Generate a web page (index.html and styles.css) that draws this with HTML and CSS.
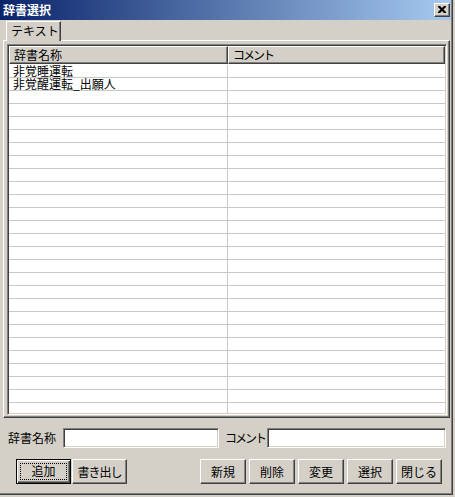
FILE: index.html
```html
<!DOCTYPE html>
<html lang="ja">
<head>
    <meta charset="UTF-8">
    <title>辞書選択</title>
    <link rel="stylesheet" href="styles.css">
</head>
<body>
    <div class="window">
        <div class="titlebar">
            <span class="title">辞書選択</span>
            <span class="close-btn">
                <svg width="8" height="7" viewBox="0 0 8 7">
                    <path d="M0 0h2l2 2 2-2h2v1l-2.5 2.5 2.5 2.5v1h-2l-2-2-2 2h-2v-1l2.5-2.5-2.5-2.5z" fill="#000"/>
                </svg>
            </span>
        </div>
        <div class="content">
            <div class="tabs">
                <div class="tab">テキスト</div>
            </div>
            <div class="panel">
                <div class="list">
                    <div class="list-header">
                        <div class="head-cell col-name">辞書名称</div>
                        <div class="head-cell col-comment narrow">コメント</div>
                    </div>
                    <div class="list-body">
                        <div class="row"><div class="cell col-name">非覚睡運転</div><div class="cell col-comment"></div></div>
                        <div class="row"><div class="cell col-name">非覚醒運転_出願人</div><div class="cell col-comment"></div></div>
                        <div class="row"><div class="cell col-name"></div><div class="cell col-comment"></div></div>
                        <div class="row"><div class="cell col-name"></div><div class="cell col-comment"></div></div>
                        <div class="row"><div class="cell col-name"></div><div class="cell col-comment"></div></div>
                        <div class="row"><div class="cell col-name"></div><div class="cell col-comment"></div></div>
                        <div class="row"><div class="cell col-name"></div><div class="cell col-comment"></div></div>
                        <div class="row"><div class="cell col-name"></div><div class="cell col-comment"></div></div>
                        <div class="row"><div class="cell col-name"></div><div class="cell col-comment"></div></div>
                        <div class="row"><div class="cell col-name"></div><div class="cell col-comment"></div></div>
                        <div class="row"><div class="cell col-name"></div><div class="cell col-comment"></div></div>
                        <div class="row"><div class="cell col-name"></div><div class="cell col-comment"></div></div>
                        <div class="row"><div class="cell col-name"></div><div class="cell col-comment"></div></div>
                        <div class="row"><div class="cell col-name"></div><div class="cell col-comment"></div></div>
                        <div class="row"><div class="cell col-name"></div><div class="cell col-comment"></div></div>
                        <div class="row"><div class="cell col-name"></div><div class="cell col-comment"></div></div>
                        <div class="row"><div class="cell col-name"></div><div class="cell col-comment"></div></div>
                        <div class="row"><div class="cell col-name"></div><div class="cell col-comment"></div></div>
                        <div class="row"><div class="cell col-name"></div><div class="cell col-comment"></div></div>
                        <div class="row"><div class="cell col-name"></div><div class="cell col-comment"></div></div>
                        <div class="row"><div class="cell col-name"></div><div class="cell col-comment"></div></div>
                        <div class="row"><div class="cell col-name"></div><div class="cell col-comment"></div></div>
                        <div class="row"><div class="cell col-name"></div><div class="cell col-comment"></div></div>
                        <div class="row"><div class="cell col-name"></div><div class="cell col-comment"></div></div>
                        <div class="row"><div class="cell col-name"></div><div class="cell col-comment"></div></div>
                        <div class="row"><div class="cell col-name"></div><div class="cell col-comment"></div></div>
                        <div class="row"><div class="cell col-name"></div><div class="cell col-comment"></div></div>
                        <div class="row"><div class="cell col-name"></div><div class="cell col-comment"></div></div>
                    </div>
                </div>
            </div>
            <div class="form-row">
                <label class="field-label label-name">辞書名称</label>
                <input type="text" class="field input-name">
                <label class="field-label label-comment narrow">コメント</label>
                <input type="text" class="field input-comment">
            </div>
            <div class="button-row">
                <div class="button-group left">
                    <button class="btn btn-default"><span class="focus">追加</span></button>
                    <button class="btn btn-wide">書き出し</button>
                </div>
                <div class="button-group right">
                    <button class="btn">新規</button>
                    <button class="btn">削除</button>
                    <button class="btn">変更</button>
                    <button class="btn">選択</button>
                    <button class="btn">閉じる</button>
                </div>
            </div>
        </div>
    </div>
</body>
</html>
```

FILE: styles.css
```css
body {
    margin: 0;
    padding: 0;
    background-color: #d4d0c8; /* classic dialog grey */
    font-family: "Noto Sans CJK JP", "DejaVu Sans", sans-serif;
    font-size: 12px;
    color: #000;
}

.window {
    width: 453px;
    height: 495px;
    box-sizing: border-box;
    border-right: 1px solid #404040;
    border-bottom: 1px solid #404040;
    box-shadow: inset -1px -1px #808080;
    background-color: #d4d0c8;
    overflow: hidden;
}

/* Title bar */
.titlebar {
    height: 20px;
    width: 451px;
    display: flex;
    align-items: center;
    justify-content: space-between;
    background: linear-gradient(to right, #0a246a, #a6caf0);
}

.title {
    color: #fff;
    font-weight: bold;
    font-size: 12px;
    line-height: 14px;
    padding-left: 3px;
}

.close-btn {
    width: 16px;
    height: 14px;
    box-sizing: border-box;
    margin-right: 1px;
    display: flex;
    align-items: center;
    justify-content: center;
    background-color: #d4d0c8;
    border: 1px solid;
    border-color: #fff #404040 #404040 #fff;
    box-shadow: inset -1px -1px #808080;
}

.close-btn svg {
    margin-left: -1px;
    margin-top: -1px;
}

/* Katakana in the old UI font is narrow */
.narrow {
    letter-spacing: -2px;
}

/* Tab + panel */
.content {
    padding-left: 3px;
}

.tabs {
    display: flex;
    padding-left: 3px;
    margin-top: 1px;
}

.tab {
    position: relative; /* sits on top of the panel border */
    z-index: 1;
    width: 55px;
    height: 20px;
    box-sizing: border-box;
    margin-bottom: -1px;
    padding: 2px 0 0 4px;
    line-height: 14px;
    background-color: #d4d0c8;
    border-top: 1px solid #fff;
    border-left: 1px solid #fff;
    border-right: 1px solid #404040;
    box-shadow: inset -1px 0 #808080;
}

.panel {
    width: 447px;
    height: 378px;
    box-sizing: border-box;
    padding: 3px;
    border: 1px solid;
    border-color: #fff #404040 #404040 #fff;
    box-shadow: inset -1px -1px #808080;
}

/* List view */
.list {
    width: 440px;
    height: 371px;
    box-sizing: border-box;
    border: 1px solid;
    border-color: #808080 #fff #fff #808080;
    box-shadow: inset 1px 1px #404040, inset -1px -1px #d4d0c8;
    padding: 1px;
    background-color: #fff;
    overflow: hidden;
}

.list-header {
    display: flex;
    height: 18px;
}

.head-cell {
    height: 18px;
    box-sizing: border-box;
    padding-left: 4px;
    line-height: 15px;
    background-color: #d4d0c8;
    border: 1px solid;
    border-color: #fff #404040 #404040 #fff;
    box-shadow: inset -1px -1px #808080;
}

.col-name {
    width: 219px;
}

.col-comment {
    width: 217px;
}

.list-body {
    height: 348px;
    padding-top: 1px;
    overflow: hidden;
}

.row {
    display: flex;
    height: 12px;
    border-bottom: 1px solid #c8c8c8;
}

.cell {
    height: 12px;
    line-height: 12px;
    box-sizing: border-box;
    white-space: nowrap;
}

.cell.col-name {
    padding-left: 4px;
    border-right: 1px solid #c8c8c8;
}

/* Name / comment fields */
.form-row {
    display: flex;
    align-items: center;
    margin-top: 10px;
    height: 20px;
}

.field-label {
    line-height: 14px;
    white-space: nowrap;
}

.label-name {
    width: 55px;
    margin-left: 5px;
}

.label-comment {
    width: 42px;
    margin-left: 6px;
}

.field {
    height: 20px;
    box-sizing: border-box;
    margin: 0;
    padding: 0 2px;
    border: 1px solid;
    border-color: #808080 #fff #fff #808080;
    box-shadow: inset 1px 1px #404040, inset -1px -1px #d4d0c8;
    background-color: #fff;
    font: inherit;
    outline: none;
}

.input-name {
    width: 156px;
}

.input-comment {
    width: 179px;
}

/* Buttons */
.button-row {
    display: flex;
    justify-content: space-between;
    margin-top: 11px;
    padding-left: 13px;
    width: 426px;
}

.button-group {
    display: flex;
    gap: 3px;
}

.button-group.left {
    gap: 1px;
}

.btn {
    width: 46px;
    height: 25px;
    box-sizing: border-box;
    margin: 0;
    padding: 0;
    background-color: #d4d0c8;
    border: 1px solid;
    border-color: #fff #404040 #404040 #fff;
    box-shadow: inset -1px -1px #808080;
    font: inherit;
    color: #000;
    line-height: 14px;
}

.btn-default {
    width: 55px;
    border: 1px solid #000;
    box-shadow: inset 1px 1px #fff, inset -1px -1px #404040, inset -2px -2px #808080;
    padding: 3px;
}

.btn-default .focus {
    display: block;
    height: 17px;
    box-sizing: border-box;
    border: 1px dotted #000;
    line-height: 14px;
}

.btn-wide {
    width: 55px;
    letter-spacing: -1px;
}
```
